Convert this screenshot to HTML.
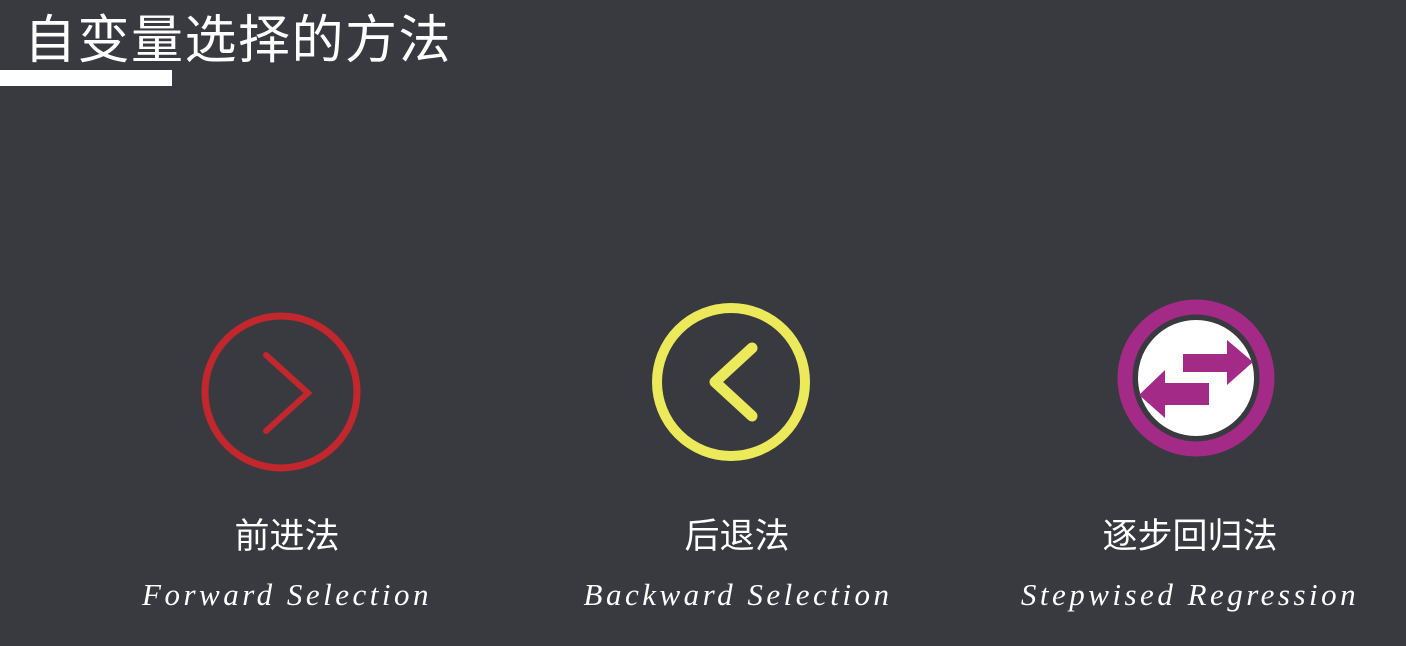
<!DOCTYPE html>
<html><head><meta charset="utf-8"><style>
body{margin:0;width:1406px;height:646px;background:#393a40;position:relative;overflow:hidden;font-family:"Liberation Sans","Noto Sans CJK SC",sans-serif;color:#fff}
.t{position:absolute;left:24px;top:10px;font-size:52px;letter-spacing:1.5px;line-height:62px}
.bar{position:absolute;left:0;top:70px;width:172px;height:16px;background:#fff}
.cn{position:absolute;top:514px;font-size:35px;line-height:46px;text-align:center;width:400px}
.en{position:absolute;top:575px;font-family:"Liberation Serif",serif;font-style:italic;font-size:31px;letter-spacing:3.5px;text-align:center;width:500px;line-height:40px}
</style></head><body>
<div class="t">自变量选择的方法</div>
<div class="bar"></div>
<svg width="1406" height="646" style="position:absolute;left:0;top:0">
<circle cx="281" cy="392" r="76" fill="none" stroke="#c1272d" stroke-width="7"/>
<polyline points="266,355 308,393 266,431" fill="none" stroke="#c1272d" stroke-width="6" stroke-linecap="round"/>
<circle cx="731" cy="382" r="74" fill="none" stroke="#ecea5a" stroke-width="10"/>
<polyline points="752,348 715,382 752,416" fill="none" stroke="#ecea5a" stroke-width="11" stroke-linecap="round" stroke-linejoin="round"/>
<circle cx="1196" cy="378" r="71" fill="none" stroke="#a32a86" stroke-width="15"/>
<circle cx="1196" cy="378" r="58" fill="#fff"/>
<path d="M1183 354 H1227 V340 L1253 362 L1227 385 V372 H1183 Z" fill="#a32a86"/>
<path d="M1209 383 H1165 V370 L1139 395 L1165 418 V405 H1209 Z" fill="#a32a86"/>
</svg>
<div class="cn" style="left:87px">前进法</div>
<div class="en" style="left:37px">Forward Selection</div>
<div class="cn" style="left:537px">后退法</div>
<div class="en" style="left:488px">Backward Selection</div>
<div class="cn" style="left:990px">逐步回归法</div>
<div class="en" style="left:940px">Stepwised Regression</div>
</body></html>
